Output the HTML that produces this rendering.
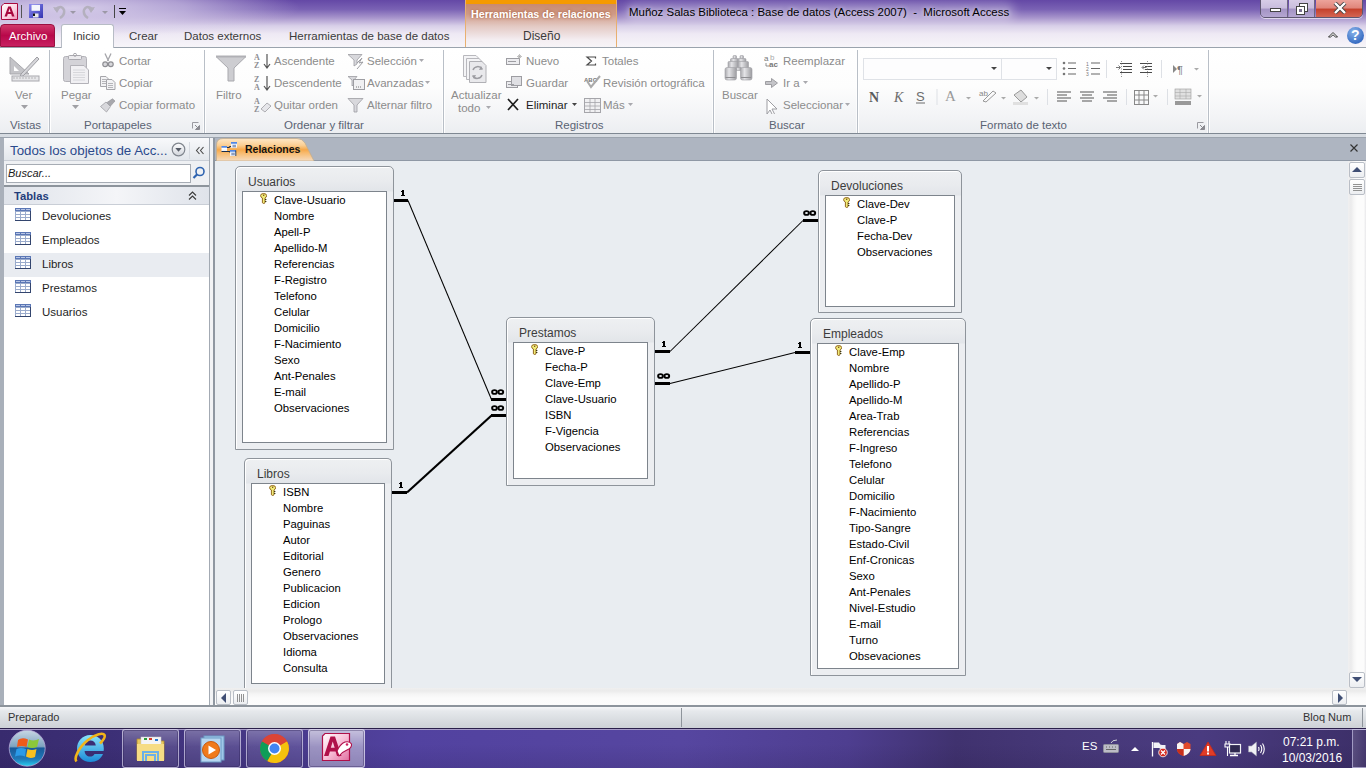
<!DOCTYPE html>
<html><head><meta charset="utf-8">
<style>
*{margin:0;padding:0;box-sizing:border-box}
html,body{width:1366px;height:768px;overflow:hidden;background:#fff;font-family:"Liberation Sans",sans-serif;position:relative}
.a{position:absolute}
.t{position:absolute;white-space:nowrap;font-size:11.5px;line-height:14px}
/* title bar */
#title{left:0;top:0;width:1366px;height:47px;background:radial-gradient(ellipse 230px 30px at 70px 8px,rgba(222,214,238,0.92),rgba(222,214,238,0.6) 50%,rgba(222,214,238,0) 100%),linear-gradient(180deg,#6448a6 0%,#7a62b4 20%,#a895cc 38%,#d8cfe8 55%,#eee9f4 72%,#f7f5f9 100%)}
#ribbon{left:0;top:47px;width:1366px;height:87px;background:linear-gradient(180deg,#ffffff 0%,#fdfdfd 45%,#f3f4f6 80%,#eceef1 100%);border-top:1px solid #9aa3ad;border-bottom:1px solid #7f8892}
.dis{color:#8c8c8c}
.glab{color:#5a6373;font-size:11.5px}
.sep{position:absolute;top:50px;width:1px;height:83px;background:#b9bfc7;box-shadow:1px 0 0 #fff,-1px 0 0 rgba(255,255,255,.7)}
#band{left:0;top:134px;width:1366px;height:4px;background:#d6dbe1;border-bottom:1px solid #9ca4ae}
#nav{left:4px;top:138px;width:205px;height:567px;background:#fff}
#navside{left:0;top:138px;width:4px;height:568px;background:#a9b0ba}
#navhdr{left:4px;top:138px;width:205px;height:23px;background:linear-gradient(180deg,#f8f9fb,#e3e7ec);border-bottom:1px solid #c9ced6}
#doc{left:215px;top:138px;width:1151px;height:567px;background:#e9edf1}
#splitter{left:209px;top:138px;width:6px;height:568px;background:#f2f3f5;border-left:1px solid #a3aab3;border-right:2px solid #8f97a1}
#tabstrip{left:215px;top:138px;width:1151px;height:23px;background:#aeb5c1;border-bottom:1px solid #8f98a5}
#status{left:0;top:705px;width:1366px;height:23px;background:linear-gradient(180deg,#8d949c 0,#8d949c 2px,#f6f7f9 2px,#e6e9ec 6px,#cdd1d6 100%)}
#taskbar{left:0;top:728px;width:1366px;height:40px;background:linear-gradient(180deg,rgba(0,0,0,0) 40%,rgba(20,10,40,0.12) 100%),linear-gradient(90deg,#382b6e 0%,#3c2f76 8%,#463886 18%,#5242a0 30%,#5646a0 50%,#4e3e90 62%,#40326f 70%,#463878 78%,#4a3b80 88%,#3c2f68 100%)}
.tbl{position:absolute;border:1px solid #8f959c;border-radius:6px 6px 0 0;background:linear-gradient(180deg,#fbfbfc,#e6e9ee 14px,#eef0f3 24px,#eef0f3)}
.tbl .h{position:absolute;left:12px;top:6px;font-size:12px;color:#3a3a3a}
.tbl .b{position:absolute;background:#fff;border:1px solid #8f959c}
.fl{font-size:11.3px;color:#000}
</style></head><body>
<div id="title" class="a"></div>
<div id="ribbon" class="a"></div>

<!-- TITLE BAR -->
<div class="a" style="left:465px;top:0;width:152px;height:47px;background:linear-gradient(180deg,#f59a00 0,#f59a00 4px,#c98a6e 4px,#cf9a86 14px,#e3c9c3 26px,#f4eef2 40px,#f7f4f7 47px);border-left:1px solid #e8b070;border-right:1px solid #e8b070"></div>
<div class="t" style="left:471px;top:7px;font-size:10.7px;color:#fff;font-weight:bold;text-shadow:0 0 3px #a0522d">Herramientas de relaciones</div>
<div class="t" style="left:523px;top:29px;font-size:12px;color:#3b3b3b">Diseño</div>
<div class="a" style="left:625px;top:2px;width:390px;height:20px;border-radius:10px;background:rgba(255,255,255,0.28);filter:blur(5px)"></div><div class="t" style="left:629px;top:5px;font-size:11.45px;color:#000;text-shadow:0 0 5px rgba(255,255,255,.8)">Muñoz Salas Biblioteca : Base de datos (Access 2007)&nbsp; -&nbsp; Microsoft Access</div>
<!-- QAT -->
<svg class="a" style="left:1px;top:3px" width="17" height="17"><defs><linearGradient id="acg" x1="0" y1="0" x2="1" y2="1"><stop offset="0" stop-color="#ffffff"/><stop offset="0.6" stop-color="#fbd0e0"/><stop offset="1" stop-color="#f090b8"/></linearGradient><linearGradient id="svg" x1="0" y1="0" x2="1" y2="1"><stop offset="0" stop-color="#8a8af0"/><stop offset="1" stop-color="#3434b0"/></linearGradient></defs><path d="M3 0.5H16.5V16.5H0.5V3Z" fill="url(#acg)" stroke="#a8083e" stroke-width="1"/><path d="M3.5 13.5L7.2 3.5H9.8L13.5 13.5H11L10.2 11H6.8L6 13.5Z M7.4 9H9.6L8.5 5.6Z" fill="#a8083e"/></svg>
<div class="a" style="left:21px;top:5px;width:1px;height:13px;background:#555"></div>
<svg class="a" style="left:29px;top:4px" width="15" height="15"><rect x="0" y="0" width="14" height="14" fill="url(#svg)"/><rect x="2.5" y="0.8" width="8.5" height="6" fill="#f4f6fc"/><rect x="4" y="9.5" width="5.5" height="4" fill="#e8e8e8"/><rect x="4" y="9.5" width="2" height="2.5" fill="#111"/></svg>
<svg class="a" style="left:52px;top:4px" width="60" height="15"><path d="M3 6 Q9 0 12 6 Q13 11 8 14" stroke="#b4b0be" stroke-width="2.5" fill="none"/><path d="M1 3 L5 9 L8 4Z" fill="#b4b0be"/><path d="M18 7 L24 7 L21 10Z" fill="#9c98a6"/><path d="M41 6 Q35 0 32 6 Q31 11 36 14" stroke="#b4b0be" stroke-width="2.5" fill="none"/><path d="M43 3 L39 9 L36 4Z" fill="#b4b0be"/><path d="M50 7 L56 7 L53 10Z" fill="#9c98a6"/></svg>
<div class="a" style="left:114px;top:5px;width:1px;height:13px;background:#444"></div>
<svg class="a" style="left:118px;top:7px" width="10" height="10"><rect x="1" y="1" width="7" height="1" fill="#000"/><path d="M1 4 L8 4 L4.5 8Z" fill="#000"/></svg>
<!-- window buttons -->
<div class="a" style="left:1260px;top:-1px;width:103px;height:19px;border:1px solid #5d5670;border-radius:0 0 5px 5px;overflow:hidden;box-shadow:0 1px 0 rgba(255,255,255,.6)">
 <div class="a" style="left:0;top:0;width:27px;height:18px;background:linear-gradient(180deg,#d6cce6 0,#c9bddd 45%,#a393c4 50%,#b7a9d3 100%);border-right:1px solid #6d6680"></div>
 <div class="a" style="left:28px;top:0;width:26px;height:18px;background:linear-gradient(180deg,#d6cce6 0,#c9bddd 45%,#a393c4 50%,#b7a9d3 100%);border-right:1px solid #6d6680"></div>
 <div class="a" style="left:55px;top:0;width:48px;height:18px;background:linear-gradient(180deg,#eca39b 0,#e0857a 45%,#c4402c 50%,#d66a58 100%)"></div>
 <div class="a" style="left:9px;top:8px;width:11px;height:4px;background:#fff;border:1px solid #444"></div>
 <svg class="a" style="left:34px;top:2px" width="14" height="13"><rect x="4.5" y="1.5" width="8" height="8" fill="#fff" stroke="#444"/><rect x="1.5" y="4.5" width="8" height="8" fill="#fff" stroke="#444"/><rect x="4" y="7" width="3" height="3" fill="#7a7090"/></svg>
 <svg class="a" style="left:72px;top:2px" width="14" height="12"><path d="M2 1 L12 11 M12 1 L2 11" stroke="#444" stroke-width="4"/><path d="M2 1 L12 11 M12 1 L2 11" stroke="#fff" stroke-width="2.4"/></svg>
</div>
<svg class="a" style="left:1327px;top:30px" width="12" height="9"><path d="M1.5 7 L6 2.5 L10.5 7 L8.5 7 L6 4.8 L3.5 7Z" fill="#fff" stroke="#333" stroke-width="1" stroke-linejoin="round"/></svg>
<div class="a" style="left:1347px;top:27px;width:17px;height:17px;border-radius:50%;background:radial-gradient(circle at 40% 30%,#8ab4ea,#3a6fc4 70%,#2c58a8)"></div>
<div class="t" style="left:1351px;top:28px;font-size:14px;font-weight:bold;color:#fff">?</div>

<!-- RIBBON CONTENT -->
<div class="sep" style="left:49px"></div>
<div class="sep" style="left:204px"></div>
<div class="sep" style="left:443px"></div>
<div class="sep" style="left:713px"></div>
<div class="sep" style="left:857px"></div>
<div class="sep" style="left:1208px"></div>
<!-- Vistas -->
<svg class="a" style="left:9px;top:54px" width="32" height="30"><path d="M1 3 L1 20 L20 20Z" fill="#c4c4c8" stroke="#a8a8ad"/><path d="M5 12 L5 17 L10 17Z" fill="#fff"/><path d="M28 3 L30 5 L14 22 L11 23 L12 20Z" fill="#d6d6da" stroke="#9d9da2"/><rect x="3" y="22" width="27" height="5" fill="#e6e6e9" stroke="#a8a8ad"/><path d="M5 23v2M8 23v2M11 23v2M14 23v2M17 23v2M20 23v2M23 23v2M26 23v2" stroke="#aaa" stroke-width="0.8"/></svg>
<div class="t dis" style="left:15px;top:88px">Ver</div>
<svg class="a" style="left:21px;top:105px" width="7" height="4"><path d="M0 0H7L3.5 4Z" fill="#a0a0a5"/></svg>
<div class="t glab" style="left:10px;top:118px">Vistas</div>
<!-- Portapapeles -->
<svg class="a" style="left:62px;top:53px" width="30" height="31"><rect x="1.5" y="3.5" width="23" height="25" rx="2" fill="#d4d3d8" stroke="#b3b2b8"/><rect x="6.5" y="2.5" width="13" height="4" rx="1" fill="#ecebee" stroke="#a9a8ae"/><circle cx="13" cy="1.8" r="1.5" fill="none" stroke="#a9a8ae"/><path d="M8.5 12.5 H22 L26.5 17 V30.5 H8.5Z" fill="#f1f0f3" stroke="#b3b2b8"/><path d="M11 17h12M11 19.5h12M11 22h12M11 24.5h12M11 27h12" stroke="#d0d0d4" stroke-width="0.8"/></svg>
<div class="t dis" style="left:61px;top:88px">Pegar</div>
<svg class="a" style="left:72px;top:105px" width="7" height="4"><path d="M0 0H7L3.5 4Z" fill="#a0a0a5"/></svg>
<svg class="a" style="left:102px;top:53px" width="12" height="15"><path d="M3 0.5 L6.5 8 M9 0.5 L5.5 8" stroke="#a5a5aa" stroke-width="1.3"/><circle cx="3.2" cy="11.3" r="2.4" fill="#d8d8dc" stroke="#8f8f94" stroke-width="1.2"/><circle cx="8.8" cy="11.3" r="2.4" fill="#d8d8dc" stroke="#8f8f94" stroke-width="1.2"/></svg>
<div class="t dis" style="left:119px;top:54px">Cortar</div>
<svg class="a" style="left:100px;top:76px" width="16" height="14"><path d="M0.5 0.5H6L8.5 3V10.5H0.5Z" fill="#f2f2f4" stroke="#a5a5aa"/><path d="M2 3.5h4M2 5.5h5M2 7.5h5" stroke="#a5a5aa" stroke-width="0.8"/><path d="M6.5 3.5H12L15 6.5V13.5H6.5Z" fill="#f2f2f4" stroke="#a5a5aa"/><path d="M8 7.5h5M8 9.5h5M8 11.5h5" stroke="#a5a5aa" stroke-width="0.8"/></svg>
<div class="t dis" style="left:119px;top:76px">Copiar</div>
<svg class="a" style="left:100px;top:98px" width="16" height="15"><path d="M0.5 8.5 L6 4 L10.5 8.5 L6.5 14Z" fill="#d8d8dc" stroke="#a0a0a5" stroke-width="0.8"/><path d="M7 4.5 L12.5 0.8 L15 3 L10.5 8Z" fill="#a8a8ad" stroke="#909095" stroke-width="0.6"/></svg>
<div class="t dis" style="left:119px;top:98px">Copiar formato</div>
<svg class="a" style="left:192px;top:122px" width="8" height="8"><path d="M0.5 6.5V0.5H6.5" fill="none" stroke="#9a9aa0"/><path d="M3 3L6.5 6.5M7.5 3.5V7.5H3.5Z" stroke="#8a8a90" fill="#8a8a90" stroke-width="1"/></svg>
<div class="t glab" style="left:84px;top:118px">Portapapeles</div>
<!-- Ordenar y filtrar -->
<svg class="a" style="left:215px;top:55px" width="32" height="28"><path d="M1 1.5 H31 L19 13 V26 H13 V13Z" fill="#cdcdd1" stroke="#a9a9ae"/><path d="M1 1.5 H31" stroke="#b0b0b5" stroke-width="2"/></svg>
<div class="t dis" style="left:216px;top:88px">Filtro</div>
<svg class="a" style="left:254px;top:53px" width="18" height="62"><text x="0" y="7" font-size="8" font-family="Liberation Serif" font-weight="bold" fill="#8e8e93">A</text><text x="0" y="15" font-size="8" font-family="Liberation Serif" font-weight="bold" fill="#8e8e93">Z</text><path d="M13 1V14M10 11L13 15L16 11" stroke="#555" fill="none" stroke-width="1.2"/><text x="0" y="29" font-size="8" font-family="Liberation Serif" font-weight="bold" fill="#8e8e93">Z</text><text x="0" y="37" font-size="8" font-family="Liberation Serif" font-weight="bold" fill="#8e8e93">A</text><path d="M13 23V36M10 33L13 37L16 33" stroke="#555" fill="none" stroke-width="1.2"/><text x="0" y="51" font-size="8" font-family="Liberation Serif" font-weight="bold" fill="#8e8e93">A</text><text x="0" y="59" font-size="8" font-family="Liberation Serif" font-weight="bold" fill="#8e8e93">Z</text><path d="M7 56 L13 50 L17 53 L11 59Z" fill="#e6e6ea" stroke="#9d9da2" stroke-width="0.8"/></svg>
<div class="t dis" style="left:274px;top:54px">Ascendente</div>
<div class="t dis" style="left:274px;top:76px">Descendente</div>
<div class="t dis" style="left:274px;top:98px">Quitar orden</div>
<svg class="a" style="left:347px;top:53px" width="18" height="62"><path d="M1 1.5H15L10 7V11L7 13V7Z" fill="#d8d8dc" stroke="#9d9da2" stroke-width="0.8"/><path d="M10 10 L15 5 L12 10 L16 9 L10 16" stroke="#9d9da2" fill="none" stroke-width="1"/><path d="M1 23.5H10L7 27V31L5 33V27Z" fill="#d8d8dc" stroke="#9d9da2" stroke-width="0.8"/><rect x="6.5" y="26.5" width="11" height="10" fill="#f0f0f2" stroke="#9d9da2"/><path d="M9 34h1M11 34h1M13 34h1" stroke="#777"/><path d="M1 45.5H16L10 52V59H7V52Z" fill="#d8d8dc" stroke="#9d9da2" stroke-width="0.8"/></svg>
<div class="t dis" style="left:367px;top:54px">Selección</div>
<div class="t dis" style="left:367px;top:76px">Avanzadas</div>
<div class="t dis" style="left:367px;top:98px">Alternar filtro</div>
<svg class="a" style="left:419px;top:59px" width="5" height="3"><path d="M0 0H5L2.5 3Z" fill="#a9a9ae"/></svg>
<svg class="a" style="left:425px;top:81px" width="5" height="3"><path d="M0 0H5L2.5 3Z" fill="#a9a9ae"/></svg>
<div class="t glab" style="left:284px;top:118px">Ordenar y filtrar</div>
<!-- Registros -->
<svg class="a" style="left:462px;top:54px" width="28" height="30"><path d="M1.5 1.5H14L17 4.5V22.5H1.5Z" fill="#f4f4f6" stroke="#b8b8bd"/><path d="M4.5 4.5H17L20 7.5V25.5H4.5Z" fill="#f4f4f6" stroke="#b8b8bd"/><path d="M7.5 7.5H20L24 11.5V28.5H7.5Z" fill="#e9e9ec" stroke="#b0b0b5"/><path d="M11 16 A5 5 0 0 1 20 15 M20 21 A5 5 0 0 1 11 22" stroke="#9d9da2" stroke-width="1.5" fill="none"/><path d="M19 12 L21 15.5 L17 16Z M12 25 L10 21.5 L14 21Z" fill="#9d9da2"/></svg>
<div class="t dis" style="left:451px;top:88px">Actualizar</div>
<div class="t dis" style="left:458px;top:101px">todo</div>
<svg class="a" style="left:486px;top:106px" width="5" height="3"><path d="M0 0H5L2.5 3Z" fill="#a9a9ae"/></svg>
<svg class="a" style="left:506px;top:54px" width="18" height="60"><rect x="0.5" y="4.5" width="13" height="6" fill="#ececef" stroke="#9d9da2"/><path d="M2 7.5h8" stroke="#9d9da2"/><path d="M12 1l3 3M15 1l-3 3M13.5 0v5M11 2.5h5" stroke="#aaa" stroke-width="0.7"/><rect x="0.5" y="27.5" width="11" height="6" fill="#ececef" stroke="#9d9da2"/><rect x="5.5" y="22.5" width="10" height="9" fill="#e0e0e4" stroke="#9d9da2"/><path d="M2 30.5h6" stroke="#9d9da2"/><path d="M2 45 L12 56 M12 45 L2 56" stroke="#1e1e1e" stroke-width="1.7"/></svg>
<div class="t dis" style="left:526px;top:54px">Nuevo</div>
<div class="t dis" style="left:526px;top:76px">Guardar</div>
<div class="t" style="left:526px;top:98px;color:#1e1e1e">Eliminar</div>
<svg class="a" style="left:572px;top:103px" width="5" height="3"><path d="M0 0H5L2.5 3Z" fill="#444"/></svg>
<svg class="a" style="left:584px;top:54px" width="18" height="60"><path d="M11.5 4.5V3H3L7.5 7L3 11H11.5V9.5" stroke="#4a4a4a" stroke-width="1.2" fill="none"/><text x="0" y="28" font-size="6" font-family="Liberation Sans" font-weight="bold" fill="#777">ABC</text><path d="M3 27 L7 33 L16 22" stroke="#aaa" stroke-width="2" fill="none"/><rect x="0.5" y="44.5" width="16" height="14" fill="#f0f0f2" stroke="#a5a5aa"/><path d="M0.5 48.5h16M0.5 52h16M0.5 55.5h16M6 44.5v14M11 44.5v14" stroke="#a5a5aa" stroke-width="0.8"/></svg>
<div class="t dis" style="left:602px;top:54px">Totales</div>
<div class="t dis" style="left:603px;top:76px">Revisión ortográfica</div>
<div class="t dis" style="left:603px;top:98px">Más</div>
<svg class="a" style="left:628px;top:103px" width="5" height="3"><path d="M0 0H5L2.5 3Z" fill="#a9a9ae"/></svg>
<div class="t glab" style="left:555px;top:118px">Registros</div>
<!-- Buscar -->
<svg class="a" style="left:724px;top:55px" width="30" height="27"><defs><linearGradient id="bn" x1="0" y1="0" x2="1" y2="0"><stop offset="0" stop-color="#a9a9ad"/><stop offset="0.35" stop-color="#e4e4e7"/><stop offset="1" stop-color="#9c9ca0"/></linearGradient></defs><g fill="url(#bn)" stroke="#a0a0a4" stroke-width="0.6"><rect x="9" y="0.5" width="3.5" height="3.5" rx="1"/><rect x="16" y="0.5" width="3.5" height="3.5" rx="1"/><rect x="6.5" y="3.5" width="8" height="4" rx="1"/><rect x="14" y="3.5" width="8" height="4" rx="1"/><rect x="4" y="6.5" width="10.5" height="7" rx="1"/><rect x="14" y="6.5" width="10.5" height="7" rx="1"/><rect x="12" y="12.5" width="5" height="3"/><rect x="1" y="12.5" width="11.5" height="12.5" rx="2"/><rect x="16.5" y="12.5" width="11.5" height="12.5" rx="2"/></g><path d="M1.5 22.5h10M17 22.5h10" stroke="#8e8e92" stroke-width="1.2"/></svg>
<div class="t dis" style="left:722px;top:88px">Buscar</div>
<svg class="a" style="left:764px;top:54px" width="18" height="60"><text x="0" y="7" font-size="8" font-family="Liberation Sans" fill="#777">a</text><text x="6" y="6" font-size="8" font-family="Liberation Sans" fill="#aaa">b</text><text x="5" y="13" font-size="8" font-family="Liberation Sans" font-weight="bold" fill="#777">ac</text><path d="M2 9v3h3" stroke="#777" fill="none" stroke-width="0.8"/><path d="M1.5 27.5H7.5V24.5L13.5 29L7.5 33.5V30.5H1.5Z" fill="#c4c4c8" stroke="#8d8d92" stroke-width="0.8"/><path d="M3 45 V60 L6 56 L9 62 L11 61 L8 55 L13 55Z" fill="#fff" stroke="#9d9da2"/></svg>
<div class="t dis" style="left:783px;top:54px">Reemplazar</div>
<div class="t dis" style="left:783px;top:76px">Ir a</div>
<div class="t dis" style="left:783px;top:98px">Seleccionar</div>
<svg class="a" style="left:803px;top:81px" width="5" height="3"><path d="M0 0H5L2.5 3Z" fill="#a9a9ae"/></svg>
<svg class="a" style="left:845px;top:103px" width="5" height="3"><path d="M0 0H5L2.5 3Z" fill="#a9a9ae"/></svg>
<div class="t glab" style="left:769px;top:118px">Buscar</div>
<!-- Formato de texto -->
<div class="a" style="left:863px;top:58px;width:194px;height:22px;border:1px solid #dfe2e7;background:#fdfdfe"></div>
<div class="a" style="left:1001px;top:59px;width:1px;height:20px;background:#dfe2e7"></div>
<svg class="a" style="left:991px;top:67px" width="6" height="3"><path d="M0 0H6L3 3Z" fill="#444"/></svg>
<svg class="a" style="left:1046px;top:67px" width="6" height="3"><path d="M0 0H6L3 3Z" fill="#444"/></svg>
<svg class="a" style="left:1062px;top:61px" width="140" height="16"><circle cx="2" cy="2" r="1.3" fill="#777"/><circle cx="2" cy="7.5" r="1.3" fill="#777"/><circle cx="2" cy="13" r="1.3" fill="#777"/><path d="M6 2h8M6 7.5h8M6 13h8" stroke="#666" stroke-width="1.1"/><text x="24" y="5" font-size="5" fill="#777">1</text><text x="24" y="10" font-size="5" fill="#777">2</text><text x="24" y="15" font-size="5" fill="#777">3</text><path d="M29 2h9M29 7.5h9M29 13h9" stroke="#666" stroke-width="1.1"/><path d="M54 6.5 H58 M56.5 4.5 L58.5 6.5 L56.5 8.5" stroke="#666" stroke-width="0.9" fill="none"/><path d="M58 2.5h12M61 5.5h9M61 8.5h9M58 11.5h12" stroke="#4a4a4a" stroke-width="1.1"/><path d="M59.5 0v16" stroke="#777" stroke-width="0.8" stroke-dasharray="1 1.5"/><path d="M80.5 6.5 H84.5 M82 4.5 L80 6.5 L82 8.5" stroke="#666" stroke-width="0.9" fill="none"/><path d="M78 2.5h12M83 5.5h7M83 8.5h7M78 11.5h12" stroke="#4a4a4a" stroke-width="1.1"/><path d="M85.5 0v16" stroke="#777" stroke-width="0.8" stroke-dasharray="1 1.5"/><path d="M111 4 L115 8 L111 12Z" fill="#888"/><text x="115" y="13" font-size="11" font-family="Liberation Sans" fill="#777">¶</text><path d="M132 7H137L134.5 9.5Z" fill="#aaa"/></svg>
<div class="a" style="left:1106px;top:60px;width:1px;height:18px;background:#dde0e5"></div>
<div class="a" style="left:1161px;top:60px;width:1px;height:18px;background:#dde0e5"></div>
<svg class="a" style="left:866px;top:88px" width="340" height="18"><text x="3" y="14" font-size="14" font-family="Liberation Serif" font-weight="bold" fill="#5c5c5c">N</text><text x="28" y="14" font-size="14" font-family="Liberation Serif" font-style="italic" fill="#6c6c6c">K</text><text x="50" y="13" font-size="13" font-family="Liberation Sans" fill="#6c6c6c">S</text><path d="M50 15h9" stroke="#6c6c6c"/><path d="M71 1v16" stroke="#dde0e5"/><text x="79" y="13" font-size="15" font-family="Liberation Serif" fill="#9a9a9a">A</text><path d="M100 9H105L102.5 11.5Z" fill="#aaa"/><text x="113" y="8" font-size="8" font-family="Liberation Sans" fill="#888">ab</text><path d="M117 13 L127 3 L130 5 L120 14Z" fill="none" stroke="#999"/><path d="M135 9H140L137.5 11.5Z" fill="#aaa"/><path d="M148 7 L155 2 L161 9 L155 14Z" fill="#ddd" stroke="#999"/><rect x="147" y="14" width="15" height="3" fill="#e0e0e0"/><path d="M168 9H173L170.5 11.5Z" fill="#aaa"/><path d="M181.5 1v16" stroke="#dde0e5"/><path d="M191 4h14M191 7h10M191 10h14M191 13h10" stroke="#555" stroke-width="1.1"/><path d="M214 4h14M216 7h10M214 10h14M216 13h10" stroke="#555" stroke-width="1.1"/><path d="M237 4h14M241 7h10M237 10h14M241 13h10" stroke="#555" stroke-width="1.1"/><path d="M260.5 1v16" stroke="#dde0e5"/><rect x="268.5" y="2.5" width="14" height="14" fill="none" stroke="#888"/><path d="M273 2.5v14M278 2.5v14M268.5 7h14M268.5 12h14" stroke="#888"/><path d="M287 7H292L289.5 9.5Z" fill="#aaa"/><path d="M301.5 1v16" stroke="#dde0e5"/><rect x="309" y="1" width="16" height="10" fill="#e0e0e0" stroke="#999" stroke-width="0.6"/><path d="M309 4.5h16M309 8h16M314 1v10M320 1v10" stroke="#aaa" stroke-width="0.6"/><rect x="309" y="13" width="16" height="4" fill="#999"/><path d="M331 7H336L333.5 9.5Z" fill="#aaa"/></svg>
<svg class="a" style="left:1197px;top:122px" width="8" height="8"><path d="M0.5 6.5V0.5H6.5" fill="none" stroke="#9a9aa0"/><path d="M3 3L6.5 6.5M7.5 3.5V7.5H3.5Z" stroke="#8a8a90" fill="#8a8a90" stroke-width="1"/></svg>
<div class="t glab" style="left:980px;top:118px">Formato de texto</div>

<!-- TABS -->
<div class="a" style="left:0;top:24px;width:55px;height:23px;background:linear-gradient(180deg,#d0386a,#b8084a 50%,#c82060);border-radius:4px 4px 0 0;border:1px solid #9a1040"></div>
<div class="t" style="left:9px;top:29px;color:#fff">Archivo</div>
<div class="a" style="left:61px;top:24px;width:53px;height:24px;background:#fff;border:1px solid #b7bcc5;border-bottom:none;border-radius:3px 3px 0 0"></div>
<div class="t" style="left:73px;top:29px;color:#3b3b3b">Inicio</div>
<div class="t" style="left:129px;top:29px;color:#3b3b3b">Crear</div>
<div class="t" style="left:184px;top:29px;color:#3b3b3b">Datos externos</div>
<div class="t" style="left:289px;top:29px;color:#3b3b3b">Herramientas de base de datos</div>

<div id="band" class="a"></div>
<div id="navside" class="a"></div>
<div id="nav" class="a"></div>
<div id="navhdr" class="a"></div>
<div id="splitter" class="a"></div>
<div id="doc" class="a"></div>
<div id="tabstrip" class="a"></div>

<!-- NAV PANE -->
<div class="t" style="left:10px;top:143px;font-size:13.3px;line-height:16px;color:#2b4a8c">Todos los objetos de Acc...</div>
<svg class="a" style="left:171px;top:142px" width="15" height="15"><defs><linearGradient id="cg" x1="0" y1="0" x2="0" y2="1"><stop offset="0" stop-color="#fdfdfe"/><stop offset="1" stop-color="#d2d6dc"/></linearGradient></defs><circle cx="7.5" cy="7.5" r="6.3" fill="url(#cg)" stroke="#80868e" stroke-width="1.2"/><path d="M4.3 6H10.7L7.5 9.7Z" fill="#555b66"/></svg>
<div class="a" style="left:189px;top:142px;width:1px;height:17px;background:#d7dbe1"></div>
<svg class="a" style="left:195px;top:146px" width="10" height="9"><path d="M4.5 1L1.5 4.5L4.5 8M8.5 1L5.5 4.5L8.5 8" stroke="#4a4a4a" stroke-width="1.1" fill="none"/></svg>
<div class="a" style="left:4px;top:161px;width:205px;height:26px;background:#eef0f3;border-bottom:2px solid #8d949c"></div>
<div class="a" style="left:6px;top:164px;width:185px;height:19px;background:#fff;border:1px solid #a6acb4"></div>
<div class="t" style="left:8px;top:166px;font-size:11px;font-style:italic;color:#1a1a1a">Buscar...</div>
<svg class="a" style="left:192px;top:166px" width="14" height="14"><circle cx="8" cy="5.5" r="4" fill="none" stroke="#2e63b0" stroke-width="1.6"/><path d="M5.2 8.3 L1.5 12" stroke="#2e63b0" stroke-width="2.2"/></svg>
<div class="a" style="left:4px;top:187px;width:205px;height:18px;background:linear-gradient(90deg,#dfe3ea 0%,#f4f5f8 55%,#dfe3ea 100%);border-bottom:1px solid #c9ced6"></div>
<div class="t" style="left:14px;top:189px;font-size:11.2px;font-weight:bold;color:#1f3d7a">Tablas</div>
<svg class="a" style="left:188px;top:191px" width="9" height="10"><path d="M1 4.5L4.5 1L8 4.5M1 8.5L4.5 5L8 8.5" stroke="#3a3a3a" stroke-width="1.1" fill="none"/></svg>
<div class="a" style="left:4px;top:253px;width:205px;height:24px;background:#e9ecf1"></div>
<svg class="a" style="left:15px;top:208px" width="16" height="13"><rect x="0" y="0" width="16" height="13" fill="#9aabcc"/><rect x="0" y="0" width="16" height="3" fill="#5b77b5"/><rect x="1" y="1" width="4" height="1" fill="#b8c6e6"/><rect x="6" y="1" width="4" height="1" fill="#b8c6e6"/><rect x="11" y="1" width="4" height="1" fill="#b8c6e6"/><rect x="1" y="4" width="4" height="2" fill="#fff"/><rect x="6" y="4" width="4" height="2" fill="#fff"/><rect x="11" y="4" width="4" height="2" fill="#fff"/><rect x="1" y="7" width="4" height="2" fill="#fff"/><rect x="6" y="7" width="4" height="2" fill="#fff"/><rect x="11" y="7" width="4" height="2" fill="#fff"/><rect x="1" y="10" width="4" height="2" fill="#fff"/><rect x="6" y="10" width="4" height="2" fill="#fff"/><rect x="11" y="10" width="4" height="2" fill="#fff"/><rect x="15" y="3" width="1" height="10" fill="#33456e"/><rect x="0" y="12" width="16" height="1" fill="#33456e"/></svg>
<div class="t" style="left:42px;top:209px;font-size:11.5px;color:#1e1e1e">Devoluciones</div>
<svg class="a" style="left:15px;top:232px" width="16" height="13"><rect x="0" y="0" width="16" height="13" fill="#9aabcc"/><rect x="0" y="0" width="16" height="3" fill="#5b77b5"/><rect x="1" y="1" width="4" height="1" fill="#b8c6e6"/><rect x="6" y="1" width="4" height="1" fill="#b8c6e6"/><rect x="11" y="1" width="4" height="1" fill="#b8c6e6"/><rect x="1" y="4" width="4" height="2" fill="#fff"/><rect x="6" y="4" width="4" height="2" fill="#fff"/><rect x="11" y="4" width="4" height="2" fill="#fff"/><rect x="1" y="7" width="4" height="2" fill="#fff"/><rect x="6" y="7" width="4" height="2" fill="#fff"/><rect x="11" y="7" width="4" height="2" fill="#fff"/><rect x="1" y="10" width="4" height="2" fill="#fff"/><rect x="6" y="10" width="4" height="2" fill="#fff"/><rect x="11" y="10" width="4" height="2" fill="#fff"/><rect x="15" y="3" width="1" height="10" fill="#33456e"/><rect x="0" y="12" width="16" height="1" fill="#33456e"/></svg>
<div class="t" style="left:42px;top:233px;font-size:11.5px;color:#1e1e1e">Empleados</div>
<svg class="a" style="left:15px;top:256px" width="16" height="13"><rect x="0" y="0" width="16" height="13" fill="#9aabcc"/><rect x="0" y="0" width="16" height="3" fill="#5b77b5"/><rect x="1" y="1" width="4" height="1" fill="#b8c6e6"/><rect x="6" y="1" width="4" height="1" fill="#b8c6e6"/><rect x="11" y="1" width="4" height="1" fill="#b8c6e6"/><rect x="1" y="4" width="4" height="2" fill="#fff"/><rect x="6" y="4" width="4" height="2" fill="#fff"/><rect x="11" y="4" width="4" height="2" fill="#fff"/><rect x="1" y="7" width="4" height="2" fill="#fff"/><rect x="6" y="7" width="4" height="2" fill="#fff"/><rect x="11" y="7" width="4" height="2" fill="#fff"/><rect x="1" y="10" width="4" height="2" fill="#fff"/><rect x="6" y="10" width="4" height="2" fill="#fff"/><rect x="11" y="10" width="4" height="2" fill="#fff"/><rect x="15" y="3" width="1" height="10" fill="#33456e"/><rect x="0" y="12" width="16" height="1" fill="#33456e"/></svg>
<div class="t" style="left:42px;top:257px;font-size:11.5px;color:#1e1e1e">Libros</div>
<svg class="a" style="left:15px;top:280px" width="16" height="13"><rect x="0" y="0" width="16" height="13" fill="#9aabcc"/><rect x="0" y="0" width="16" height="3" fill="#5b77b5"/><rect x="1" y="1" width="4" height="1" fill="#b8c6e6"/><rect x="6" y="1" width="4" height="1" fill="#b8c6e6"/><rect x="11" y="1" width="4" height="1" fill="#b8c6e6"/><rect x="1" y="4" width="4" height="2" fill="#fff"/><rect x="6" y="4" width="4" height="2" fill="#fff"/><rect x="11" y="4" width="4" height="2" fill="#fff"/><rect x="1" y="7" width="4" height="2" fill="#fff"/><rect x="6" y="7" width="4" height="2" fill="#fff"/><rect x="11" y="7" width="4" height="2" fill="#fff"/><rect x="1" y="10" width="4" height="2" fill="#fff"/><rect x="6" y="10" width="4" height="2" fill="#fff"/><rect x="11" y="10" width="4" height="2" fill="#fff"/><rect x="15" y="3" width="1" height="10" fill="#33456e"/><rect x="0" y="12" width="16" height="1" fill="#33456e"/></svg>
<div class="t" style="left:42px;top:281px;font-size:11.5px;color:#1e1e1e">Prestamos</div>
<svg class="a" style="left:15px;top:304px" width="16" height="13"><rect x="0" y="0" width="16" height="13" fill="#9aabcc"/><rect x="0" y="0" width="16" height="3" fill="#5b77b5"/><rect x="1" y="1" width="4" height="1" fill="#b8c6e6"/><rect x="6" y="1" width="4" height="1" fill="#b8c6e6"/><rect x="11" y="1" width="4" height="1" fill="#b8c6e6"/><rect x="1" y="4" width="4" height="2" fill="#fff"/><rect x="6" y="4" width="4" height="2" fill="#fff"/><rect x="11" y="4" width="4" height="2" fill="#fff"/><rect x="1" y="7" width="4" height="2" fill="#fff"/><rect x="6" y="7" width="4" height="2" fill="#fff"/><rect x="11" y="7" width="4" height="2" fill="#fff"/><rect x="1" y="10" width="4" height="2" fill="#fff"/><rect x="6" y="10" width="4" height="2" fill="#fff"/><rect x="11" y="10" width="4" height="2" fill="#fff"/><rect x="15" y="3" width="1" height="10" fill="#33456e"/><rect x="0" y="12" width="16" height="1" fill="#33456e"/></svg>
<div class="t" style="left:42px;top:305px;font-size:11.5px;color:#1e1e1e">Usuarios</div>

<div id="status" class="a"></div>

<!-- DOC TAB -->
<div class="a" style="left:216px;top:137px;width:112px;height:24px;"><svg width="112" height="24"><defs><linearGradient id="og" x1="0" y1="0" x2="0" y2="1"><stop offset="0" stop-color="#fee8c8"/><stop offset="0.3" stop-color="#fbcf94"/><stop offset="0.5" stop-color="#f6a84a"/><stop offset="0.62" stop-color="#f8b868"/><stop offset="1" stop-color="#f6dcc0"/></linearGradient></defs><path d="M0.5 24 V8 Q0.5 1.5 7 1.5 H81 Q86 1.5 89 6 L98 24Z" fill="url(#og)" stroke="#c2ad90" stroke-width="0.8"/></svg></div>
<svg class="a" style="left:221px;top:141px" width="17" height="16"><defs><linearGradient id="bx" x1="0" y1="0" x2="0" y2="1"><stop offset="0" stop-color="#3d78e0"/><stop offset="0.35" stop-color="#8fb4f0"/><stop offset="0.45" stop-color="#fff"/><stop offset="1" stop-color="#e8eef8"/></linearGradient></defs><path d="M6 6.5H8L9 5.5H10.5M1 10.5H8.5L9.5 11.5" stroke="#1a2d4a" stroke-width="1.1" fill="none"/><rect x="0.5" y="5" width="5.5" height="5.5" fill="url(#bx)"/><path d="M0.5 10.5H6" stroke="#1a2d4a"/><rect x="10" y="1" width="6" height="5.8" fill="url(#bx)"/><rect x="11.5" y="3.8" width="3.5" height="2.5" fill="#8f9fbf"/><rect x="9" y="9" width="6" height="6" fill="url(#bx)"/><rect x="10.3" y="11.8" width="3.5" height="2.5" fill="#8f9fbf"/><path d="M14.8 9.5V15" stroke="#1a2d4a" stroke-width="0.9"/></svg>
<div class="t" style="left:245px;top:142px;font-size:10.5px;font-weight:bold;color:#111">Relaciones</div>
<svg class="a" style="left:1349px;top:143px" width="10" height="10"><path d="M1.5 1.5L8.5 8.5M8.5 1.5L1.5 8.5" stroke="#333" stroke-width="1.15"/></svg>
<!-- CANVAS -->
<svg class="a" style="left:215px;top:161px" width="1134" height="527">
<g transform="translate(-215,-161)" stroke="#000" fill="none">
<path d="M393 200.5H408" stroke-width="3"/><path d="M408 200.5L491.5 399.5" stroke-width="1.05"/><path d="M491 399.5H506" stroke-width="3"/>
<path d="M391.5 492.5H407" stroke-width="3"/><path d="M407 492.5L491.5 415.5" stroke-width="2.2"/><path d="M491 415.5H506" stroke-width="3"/>
<path d="M655 351.5H670" stroke-width="3"/><path d="M670 351.5L803 220.5" stroke-width="1.05"/><path d="M803 220.5H818" stroke-width="3"/>
<path d="M655 383.5H670" stroke-width="3"/><path d="M670 383.5L795 352.5" stroke-width="1.05"/><path d="M795 352.5H810" stroke-width="3"/>
</g>
<g fill="#000" transform="translate(-215,-161)"><path d="M402 190h2v5h1v1h-4v-1h1v-3h-1v-1h1z"/><path d="M400 482h2v5h1v1h-4v-1h1v-3h-1v-1h1z"/><path d="M663 341h2v5h1v1h-4v-1h1v-3h-1v-1h1z"/><path d="M799 342h2v5h1v1h-4v-1h1v-3h-1v-1h1z"/></g>
<g transform="translate(-215,-161)" stroke="#000" fill="none" stroke-width="1.9">
<ellipse cx="494.5" cy="392" rx="2.4" ry="1.9"/><ellipse cx="500.8" cy="392" rx="2.4" ry="1.9"/>
<ellipse cx="494.5" cy="408" rx="2.4" ry="1.9"/><ellipse cx="500.8" cy="408" rx="2.4" ry="1.9"/>
<ellipse cx="806.5" cy="213" rx="2.4" ry="1.9"/><ellipse cx="812.8" cy="213" rx="2.4" ry="1.9"/>
<ellipse cx="660.5" cy="376" rx="2.4" ry="1.9"/><ellipse cx="666.8" cy="376" rx="2.4" ry="1.9"/>
</g>
</svg>
<div class="a" style="left:235px;top:166px;width:159px;height:284px;border:1px solid #8e949b;border-radius:5px 5px 0 0;box-shadow:inset 1px 1px 0 #fff;background:linear-gradient(180deg,#eef0f2 0,#e9ebee 14px,#e2e5e9 24px,#eceef1 25px,#eceef1 100%)"></div>
<div class="t" style="left:248px;top:175px;font-size:12px;color:#3c3c3c">Usuarios</div>
<div class="a" style="left:242px;top:191px;width:145px;height:252px;border:1px solid #7d848c;background:#fff"></div>
<div class="t fl" style="left:274px;top:193px">Clave-Usuario</div>
<div class="t fl" style="left:274px;top:209px">Nombre</div>
<div class="t fl" style="left:274px;top:225px">Apell-P</div>
<div class="t fl" style="left:274px;top:241px">Apellido-M</div>
<div class="t fl" style="left:274px;top:257px">Referencias</div>
<div class="t fl" style="left:274px;top:273px">F-Registro</div>
<div class="t fl" style="left:274px;top:289px">Telefono</div>
<div class="t fl" style="left:274px;top:305px">Celular</div>
<div class="t fl" style="left:274px;top:321px">Domicilio</div>
<div class="t fl" style="left:274px;top:337px">F-Nacimiento</div>
<div class="t fl" style="left:274px;top:353px">Sexo</div>
<div class="t fl" style="left:274px;top:369px">Ant-Penales</div>
<div class="t fl" style="left:274px;top:385px">E-mail</div>
<div class="t fl" style="left:274px;top:401px">Observaciones</div>
<svg class="a" style="left:260px;top:193px" width="7" height="11"><path d="M0.6 2.6 Q0.6 0.5 3.6 0.5 Q6.6 0.5 6.6 2.6 Q6.6 4.4 5 5 V9.8 L3.8 10.6 L2.4 9.8 V5 Q0.6 4.4 0.6 2.6Z" fill="#f0ec78" stroke="#8a5a10" stroke-width="0.9"/><rect x="3" y="1.6" width="1.3" height="1.3" fill="#7a4a20"/><path d="M5 6.5H6.4M5 8.5H6.4" stroke="#3a3a10" stroke-width="1"/></svg>
<div class="a" style="left:244px;top:458px;width:148px;height:230px;border:1px solid #8e949b;border-bottom:none;border-radius:5px 5px 0 0;box-shadow:inset 1px 1px 0 #fff;background:linear-gradient(180deg,#eef0f2 0,#e9ebee 14px,#e2e5e9 24px,#eceef1 25px,#eceef1 100%)"></div>
<div class="t" style="left:257px;top:467px;font-size:12px;color:#3c3c3c">Libros</div>
<div class="a" style="left:251px;top:483px;width:134px;height:201px;border:1px solid #7d848c;background:#fff"></div>
<div class="t fl" style="left:283px;top:485px">ISBN</div>
<div class="t fl" style="left:283px;top:501px">Nombre</div>
<div class="t fl" style="left:283px;top:517px">Paguinas</div>
<div class="t fl" style="left:283px;top:533px">Autor</div>
<div class="t fl" style="left:283px;top:549px">Editorial</div>
<div class="t fl" style="left:283px;top:565px">Genero</div>
<div class="t fl" style="left:283px;top:581px">Publicacion</div>
<div class="t fl" style="left:283px;top:597px">Edicion</div>
<div class="t fl" style="left:283px;top:613px">Prologo</div>
<div class="t fl" style="left:283px;top:629px">Observaciones</div>
<div class="t fl" style="left:283px;top:645px">Idioma</div>
<div class="t fl" style="left:283px;top:661px">Consulta</div>
<svg class="a" style="left:269px;top:485px" width="7" height="11"><path d="M0.6 2.6 Q0.6 0.5 3.6 0.5 Q6.6 0.5 6.6 2.6 Q6.6 4.4 5 5 V9.8 L3.8 10.6 L2.4 9.8 V5 Q0.6 4.4 0.6 2.6Z" fill="#f0ec78" stroke="#8a5a10" stroke-width="0.9"/><rect x="3" y="1.6" width="1.3" height="1.3" fill="#7a4a20"/><path d="M5 6.5H6.4M5 8.5H6.4" stroke="#3a3a10" stroke-width="1"/></svg>
<div class="a" style="left:506px;top:317px;width:149px;height:169px;border:1px solid #8e949b;border-radius:5px 5px 0 0;box-shadow:inset 1px 1px 0 #fff;background:linear-gradient(180deg,#eef0f2 0,#e9ebee 14px,#e2e5e9 24px,#eceef1 25px,#eceef1 100%)"></div>
<div class="t" style="left:519px;top:326px;font-size:12px;color:#3c3c3c">Prestamos</div>
<div class="a" style="left:513px;top:342px;width:135px;height:137px;border:1px solid #7d848c;background:#fff"></div>
<div class="t fl" style="left:545px;top:344px">Clave-P</div>
<div class="t fl" style="left:545px;top:360px">Fecha-P</div>
<div class="t fl" style="left:545px;top:376px">Clave-Emp</div>
<div class="t fl" style="left:545px;top:392px">Clave-Usuario</div>
<div class="t fl" style="left:545px;top:408px">ISBN</div>
<div class="t fl" style="left:545px;top:424px">F-Vigencia</div>
<div class="t fl" style="left:545px;top:440px">Observaciones</div>
<svg class="a" style="left:531px;top:344px" width="7" height="11"><path d="M0.6 2.6 Q0.6 0.5 3.6 0.5 Q6.6 0.5 6.6 2.6 Q6.6 4.4 5 5 V9.8 L3.8 10.6 L2.4 9.8 V5 Q0.6 4.4 0.6 2.6Z" fill="#f0ec78" stroke="#8a5a10" stroke-width="0.9"/><rect x="3" y="1.6" width="1.3" height="1.3" fill="#7a4a20"/><path d="M5 6.5H6.4M5 8.5H6.4" stroke="#3a3a10" stroke-width="1"/></svg>
<div class="a" style="left:818px;top:170px;width:144px;height:143px;border:1px solid #8e949b;border-radius:5px 5px 0 0;box-shadow:inset 1px 1px 0 #fff;background:linear-gradient(180deg,#eef0f2 0,#e9ebee 14px,#e2e5e9 24px,#eceef1 25px,#eceef1 100%)"></div>
<div class="t" style="left:831px;top:179px;font-size:12px;color:#3c3c3c">Devoluciones</div>
<div class="a" style="left:825px;top:195px;width:130px;height:112px;border:1px solid #7d848c;background:#fff"></div>
<div class="t fl" style="left:857px;top:197px">Clave-Dev</div>
<div class="t fl" style="left:857px;top:213px">Clave-P</div>
<div class="t fl" style="left:857px;top:229px">Fecha-Dev</div>
<div class="t fl" style="left:857px;top:245px">Observaciones</div>
<svg class="a" style="left:843px;top:197px" width="7" height="11"><path d="M0.6 2.6 Q0.6 0.5 3.6 0.5 Q6.6 0.5 6.6 2.6 Q6.6 4.4 5 5 V9.8 L3.8 10.6 L2.4 9.8 V5 Q0.6 4.4 0.6 2.6Z" fill="#f0ec78" stroke="#8a5a10" stroke-width="0.9"/><rect x="3" y="1.6" width="1.3" height="1.3" fill="#7a4a20"/><path d="M5 6.5H6.4M5 8.5H6.4" stroke="#3a3a10" stroke-width="1"/></svg>
<div class="a" style="left:810px;top:318px;width:156px;height:358px;border:1px solid #8e949b;border-radius:5px 5px 0 0;box-shadow:inset 1px 1px 0 #fff;background:linear-gradient(180deg,#eef0f2 0,#e9ebee 14px,#e2e5e9 24px,#eceef1 25px,#eceef1 100%)"></div>
<div class="t" style="left:823px;top:327px;font-size:12px;color:#3c3c3c">Empleados</div>
<div class="a" style="left:817px;top:343px;width:142px;height:326px;border:1px solid #7d848c;background:#fff"></div>
<div class="t fl" style="left:849px;top:345px">Clave-Emp</div>
<div class="t fl" style="left:849px;top:361px">Nombre</div>
<div class="t fl" style="left:849px;top:377px">Apellido-P</div>
<div class="t fl" style="left:849px;top:393px">Apellido-M</div>
<div class="t fl" style="left:849px;top:409px">Area-Trab</div>
<div class="t fl" style="left:849px;top:425px">Referencias</div>
<div class="t fl" style="left:849px;top:441px">F-Ingreso</div>
<div class="t fl" style="left:849px;top:457px">Telefono</div>
<div class="t fl" style="left:849px;top:473px">Celular</div>
<div class="t fl" style="left:849px;top:489px">Domicilio</div>
<div class="t fl" style="left:849px;top:505px">F-Nacimiento</div>
<div class="t fl" style="left:849px;top:521px">Tipo-Sangre</div>
<div class="t fl" style="left:849px;top:537px">Estado-Civil</div>
<div class="t fl" style="left:849px;top:553px">Enf-Cronicas</div>
<div class="t fl" style="left:849px;top:569px">Sexo</div>
<div class="t fl" style="left:849px;top:585px">Ant-Penales</div>
<div class="t fl" style="left:849px;top:601px">Nivel-Estudio</div>
<div class="t fl" style="left:849px;top:617px">E-mail</div>
<div class="t fl" style="left:849px;top:633px">Turno</div>
<div class="t fl" style="left:849px;top:649px">Obsevaciones</div>
<svg class="a" style="left:835px;top:345px" width="7" height="11"><path d="M0.6 2.6 Q0.6 0.5 3.6 0.5 Q6.6 0.5 6.6 2.6 Q6.6 4.4 5 5 V9.8 L3.8 10.6 L2.4 9.8 V5 Q0.6 4.4 0.6 2.6Z" fill="#f0ec78" stroke="#8a5a10" stroke-width="0.9"/><rect x="3" y="1.6" width="1.3" height="1.3" fill="#7a4a20"/><path d="M5 6.5H6.4M5 8.5H6.4" stroke="#3a3a10" stroke-width="1"/></svg>

<!-- SCROLLBARS -->
<div class="a" style="left:1348px;top:161px;width:18px;height:527px;background:linear-gradient(90deg,#f0f0f1 0,#ebebec 3px,#f6f6f6 6px,#fcfcfc 50%,#fcfcfc 88%,#e8e8ea 100%)"></div>
<div class="a" style="left:1349px;top:162px;width:16px;height:16px;border:1px solid #b9bec6;border-radius:2px;background:linear-gradient(180deg,#fff,#eceef1)"></div>
<svg class="a" style="left:1352px;top:166px" width="10" height="6"><path d="M0 6H10L5 1Z" fill="#3f4e74"/></svg>
<div class="a" style="left:1349px;top:179px;width:16px;height:16px;border:1px solid #b9bec6;border-radius:2px;background:linear-gradient(180deg,#fff,#eceef1)"></div>
<svg class="a" style="left:1353px;top:183px" width="9" height="8"><path d="M0 1.5H9M0 3.5H9M0 5.5H9M0 7.5H9" stroke="#777" stroke-width="0.8"/></svg>
<div class="a" style="left:1349px;top:672px;width:16px;height:16px;border:1px solid #b9bec6;border-radius:2px;background:linear-gradient(180deg,#fff,#eceef1)"></div>
<svg class="a" style="left:1352px;top:677px" width="10" height="6"><path d="M0 0H10L5 5Z" fill="#3f4e74"/></svg>
<div class="a" style="left:215px;top:688px;width:1151px;height:17px;background:linear-gradient(180deg,#efefef 0,#ebebeb 3px,#f5f5f5 6px,#fbfbfb 10px,#fcfcfc 100%)"></div>
<div class="a" style="left:216px;top:690px;width:15px;height:15px;border:1px solid #b9bec6;border-radius:2px;background:linear-gradient(180deg,#fff,#eceef1)"></div>
<svg class="a" style="left:220px;top:693px" width="6" height="10"><path d="M6 0V10L1 5Z" fill="#3f4e74"/></svg>
<div class="a" style="left:233px;top:690px;width:15px;height:15px;border:1px solid #b9bec6;border-radius:2px;background:linear-gradient(180deg,#fff,#eceef1)"></div>
<svg class="a" style="left:236px;top:694px" width="9" height="8"><path d="M1.5 0V8M3.5 0V8M5.5 0V8M7.5 0V8" stroke="#777" stroke-width="0.8"/></svg>
<div class="a" style="left:1332px;top:690px;width:15px;height:15px;border:1px solid #b9bec6;border-radius:2px;background:linear-gradient(180deg,#fff,#eceef1)"></div>
<svg class="a" style="left:1338px;top:693px" width="6" height="10"><path d="M0 0V10L5 5Z" fill="#3f4e74"/></svg>
<!-- STATUS -->
<div class="t" style="left:8px;top:710px;font-size:11px;color:#333">Preparado</div>
<div class="a" style="left:681px;top:708px;width:1px;height:19px;background:#8e949b"></div>
<div class="t" style="left:1303px;top:710px;font-size:11px;color:#333">Bloq Num</div>
<div class="a" style="left:1362px;top:708px;width:1px;height:19px;background:#8e949b"></div>

<div id="taskbar" class="a"></div>

<!-- TASKBAR CONTENT -->
<div class="a" style="left:0;top:728px;width:1366px;height:1px;background:#2a1f4a"></div><div class="a" style="left:0;top:729px;width:1366px;height:1px;background:#a89cc8"></div>
<svg class="a" style="left:8px;top:729px" width="39" height="39"><defs><linearGradient id="orb" x1="0" y1="0" x2="0" y2="1"><stop offset="0" stop-color="#c8d8e4"/><stop offset="0.45" stop-color="#7fa4c0"/><stop offset="0.5" stop-color="#1a5a9a"/><stop offset="0.8" stop-color="#1f78b8"/><stop offset="1" stop-color="#28d0f0"/></linearGradient></defs><circle cx="19.2" cy="19.2" r="18" fill="url(#orb)" stroke="#b8a8d8" stroke-width="0.8"/><path d="M10 11 Q14 8 20 10.5 L18.5 18 Q13.5 16 9 18Z" fill="#f05a1a"/><path d="M21 10.5 Q26 12.5 31 10 L29 18 Q24 20 19.5 18Z" fill="#8cc83a"/><path d="M8.5 20 Q13 18 18 20 L17 27.5 Q12 25.5 7 27.5Z" fill="#2a9ae8"/><path d="M19.5 20 Q24 22 28.5 20 L27 28 Q22 30 18 27.5Z" fill="#f8c020"/></svg>
<svg class="a" style="left:73px;top:732px" width="34" height="32"><defs><linearGradient id="ieg" x1="0" y1="0" x2="0" y2="1"><stop offset="0" stop-color="#8ae4fa"/><stop offset="1" stop-color="#1a8ad8"/></linearGradient></defs><path d="M17.5 3 C9 3 4 9.5 4 16.5 C4 24 9.5 30 17.5 30 C23.5 30 28 27 30 22 H21.5 C20.5 23.8 19 24.6 17.2 24.6 C14 24.6 11.8 22.3 11.6 19 H30.6 C30.8 18 30.8 17.5 30.8 16.5 C30.8 8.5 25 3 17.5 3Z M11.8 13.5 C12.3 10.4 14.5 8.6 17.3 8.6 C20.2 8.6 22.4 10.4 22.8 13.5Z" fill="url(#ieg)"/><path d="M3.5 29.5 C0.5 26 6 15 15 8 C23 2 30 0.5 31.5 3 C32.5 5 29.5 9 27 11.5" stroke="#f2b418" stroke-width="2.6" fill="none"/></svg>
<div class="a" style="left:122px;top:729px;width:57px;height:39px;border:1px solid rgba(220,215,240,0.65);border-radius:3px;background:linear-gradient(180deg,rgba(255,255,255,0.30),rgba(255,255,255,0.12) 45%,rgba(255,255,255,0.08));box-shadow:inset 0 0 0 1px rgba(40,30,80,0.35)"></div>
<div class="a" style="left:184px;top:729px;width:57px;height:39px;border:1px solid rgba(220,215,240,0.65);border-radius:3px;background:linear-gradient(180deg,rgba(255,255,255,0.30),rgba(255,255,255,0.12) 45%,rgba(255,255,255,0.08));box-shadow:inset 0 0 0 1px rgba(40,30,80,0.35)"></div>
<div class="a" style="left:246px;top:729px;width:57px;height:39px;border:1px solid rgba(220,215,240,0.65);border-radius:3px;background:linear-gradient(180deg,rgba(255,255,255,0.30),rgba(255,255,255,0.12) 45%,rgba(255,255,255,0.08));box-shadow:inset 0 0 0 1px rgba(40,30,80,0.35)"></div>
<div class="a" style="left:308px;top:729px;width:57px;height:39px;border:1px solid rgba(220,215,240,0.65);border-radius:3px;background:linear-gradient(180deg,rgba(255,255,255,0.68),rgba(255,255,255,0.45) 45%,rgba(255,255,255,0.38));box-shadow:inset 0 0 0 1px rgba(40,30,80,0.35)"></div>

<svg class="a" style="left:135px;top:733px" width="32" height="30"><path d="M2 6 H12 L14 8 H29 V27 H2Z" fill="#e8c860" stroke="#b08a2a" stroke-width="0.8"/><rect x="6" y="4" width="20" height="8" fill="#f4f4f4" stroke="#ccc" stroke-width="0.5"/><rect x="9" y="5" width="3" height="2" fill="#2c9b3a"/><rect x="14" y="5" width="3" height="2" fill="#d23a2a"/><rect x="20" y="6" width="3" height="2" fill="#2a7ad2"/><path d="M2 11 H29 V28 H2Z" fill="#f6dc84"/><path d="M8 28 V19 H23 V28 M11 28 V22 H20 V28" stroke="#6ab0e8" stroke-width="2" fill="none"/></svg>
<svg class="a" style="left:197px;top:733px" width="32" height="30"><rect x="7" y="3" width="20" height="24" fill="#9fc7e8" stroke="#6d9bc6"/><rect x="4" y="5" width="20" height="24" fill="#b7d6f0" stroke="#6d9bc6"/><circle cx="14" cy="17" r="8.5" fill="#f07a1a" stroke="#c85a10"/><path d="M11.5 12.5 V21.5 L19 17Z" fill="#fff"/></svg>
<svg class="a" style="left:259px;top:733px" width="31" height="31"><circle cx="15.5" cy="15.5" r="14.5" fill="#db4437"/><path d="M15.5 15.5 L28 8.3 A14.5 14.5 0 0 1 8.2 28.1Z" fill="#f4c20d"/><path d="M15.5 15.5 L8.2 28.1 A14.5 14.5 0 0 1 3 8.3Z" fill="#0f9d58"/><path d="M15.5 15.5 L3 8.3 A14.5 14.5 0 0 1 28 8.3Z" fill="#db4437"/><circle cx="15.5" cy="15.5" r="6.5" fill="#fff"/><circle cx="15.5" cy="15.5" r="5" fill="#4285f4"/></svg>
<svg class="a" style="left:321px;top:732px" width="32" height="32"><defs><linearGradient id="tac" x1="0" y1="0" x2="1" y2="1"><stop offset="0" stop-color="#ffffff"/><stop offset="0.5" stop-color="#f8c0d8"/><stop offset="1" stop-color="#e070a0"/></linearGradient></defs><path d="M4 1.5H28.5V28.5H1.5V4Z" fill="url(#tac)" stroke="#b0104a" stroke-width="1.2"/><path d="M3 24 L9.5 4.5 H14 L20.5 24 H16 L14.6 19.5 H8.9 L7.5 24Z M9.8 15.8 H13.7 L11.75 9.4Z" fill="#b0104a"/><path d="M16 19 Q19 12 24 10 Q29 9 30.5 12 Q31 16 26 18 Q21 20 18 24Z" fill="#fff" stroke="#b0104a" stroke-width="1.1"/><circle cx="26" cy="12.5" r="1.3" fill="#d02060"/></svg>
<!-- tray -->
<div class="t" style="left:1082px;top:739px;font-size:11.5px;color:#fff">ES</div>
<svg class="a" style="left:1103px;top:739px" width="16" height="14"><path d="M8 4 Q9 1 14 1" stroke="#cfcfd8" fill="none"/><rect x="0.5" y="5.5" width="15" height="8" rx="1" fill="#bcbcc6" stroke="#8f8f9c"/><path d="M3 8h1M6 8h1M9 8h1M12 8h1M3 10.5h10" stroke="#666"/></svg>
<svg class="a" style="left:1130px;top:746px" width="10" height="6"><path d="M1 5 L5 1 L9 5Z" fill="#fff"/></svg>
<svg class="a" style="left:1151px;top:741px" width="18" height="17"><path d="M1.5 1 V15.5" stroke="#fff" stroke-width="1.3"/><path d="M2.5 1.5 H8 Q9 4 11 4 H14.5 V8 H11 Q9 8 8 7 H2.5Z" fill="#f2f2f6"/><circle cx="12" cy="11.5" r="4.3" fill="#d42a20" stroke="#fff" stroke-width="0.8"/><path d="M10 9.5 L14 13.5 M14 9.5 L10 13.5" stroke="#fff" stroke-width="1.3"/></svg>
<svg class="a" style="left:1176px;top:741px" width="16" height="16"><path d="M1 3 L4 1 L7.5 3 L11 1 L14.5 3 V8 Q14.5 12.5 7.5 15 Q0.5 12.5 1 8Z" fill="#e24a2a"/><path d="M1 3 L4 1 L7.5 3 V8 H1Z" fill="#f8f4f2"/><path d="M7.5 8 H14.5 Q14.5 12.5 7.5 15Z" fill="#f8f4f2"/><path d="M1 8 H7.5 V15 Q1 12.5 1 8Z" fill="#c8301c"/></svg>
<svg class="a" style="left:1199px;top:741px" width="18" height="16"><path d="M9 1 L17 14.5 H1Z" fill="#e23c26" stroke="#c82a18" stroke-width="0.8" stroke-linejoin="round"/><rect x="8" y="5" width="2" height="5.5" fill="#fff"/><rect x="8" y="11.5" width="2" height="2" fill="#fff"/></svg>
<svg class="a" style="left:1224px;top:740px" width="18" height="17"><path d="M2 1V4M5 1V4M1 4H6V7H1Z M3.5 7V16" stroke="#fff" stroke-width="1.1" fill="none"/><rect x="5.5" y="4.5" width="11" height="8.5" fill="#2e2850" stroke="#f2f2f6" stroke-width="1.2"/><path d="M11 13 V15 M6 15.5 H14" stroke="#fff" stroke-width="1.3"/></svg>
<svg class="a" style="left:1247px;top:741px" width="18" height="16"><path d="M1.5 5 H4.5 L9.5 1 V15 L4.5 11 H1.5Z" fill="#f0f0f4" stroke="#9a9aae" stroke-width="0.6"/><path d="M11.5 6 Q12.5 8 11.5 10 M13.5 4 Q16 8 13.5 12 M15.5 2.5 Q19 8 15.5 13.5" stroke="#fff" fill="none" stroke-width="1.1"/></svg>
<div class="t" style="left:1283px;top:735px;font-size:12px;color:#fff">07:21 p.m.</div>
<div class="t" style="left:1282px;top:751px;font-size:12px;color:#fff">10/03/2016</div>
<div class="a" style="left:1352px;top:729px;width:14px;height:39px;border:1px solid rgba(200,195,230,0.7);border-right:none;background:linear-gradient(90deg,rgba(255,255,255,0.15),rgba(255,255,255,0.05))"></div>
</body></html>
